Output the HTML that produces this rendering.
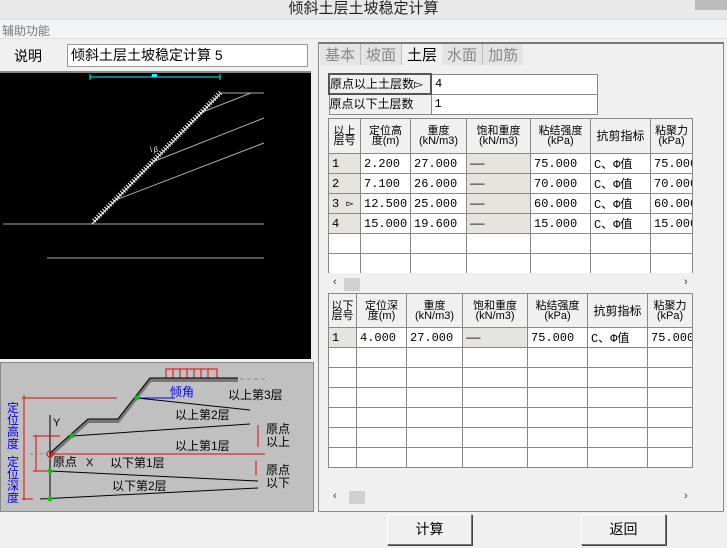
<!DOCTYPE html>
<html><head><meta charset="utf-8"><style>
*{margin:0;padding:0;box-sizing:border-box}
body{width:727px;height:548px;background:#f0f0f0;position:relative;overflow:hidden;font-family:"Liberation Sans","Noto Sans CJK SC",sans-serif;font-size:13px;color:#000}
.a{position:absolute}
table{border-collapse:collapse;table-layout:fixed;font-family:"Liberation Mono","Noto Sans CJK SC",monospace;font-size:12px}
td{border:1px solid #888;height:20px;padding:0 3px;white-space:nowrap;overflow:hidden}
th{border:1px solid #888;font-weight:normal;background:#f0f0f0;font-size:11px;line-height:10px;font-family:"Liberation Sans","Noto Sans CJK SC",sans-serif;overflow:hidden;white-space:nowrap}
td.g{background:#e6e4de}
td.h{background:#e6e4de}
.sb{position:absolute;height:13px;font-size:11px;color:#333}
.btn{position:absolute;border:1px solid #777;border-top-color:#fff;border-left-color:#fff;box-shadow:1px 1px 0 #444;background:#f0f0f0;text-align:center;line-height:29px;font-size:14px}
</style></head><body>
<div class="a" style="left:0;top:0;width:727px;height:19px;background:#e9e9e9"></div>
<div class="a" style="left:0;top:-3px;width:727px;text-align:center;font-size:15px;color:#222">倾斜土层土坡稳定计算</div>
<div class="a" style="left:695px;top:0;width:32px;height:10px;background:#bbb"></div>
<div class="a" style="left:0;top:19px;width:727px;height:20px;background:#f3f4f6;border-top:1px solid #ddd;border-bottom:1px solid #ddd"></div>
<div class="a" style="left:2px;top:22px;font-size:12px;color:#777">辅助功能</div>
<div class="a" style="left:14px;top:46px;font-size:14px">说明</div>
<div class="a" style="left:67px;top:44px;width:241px;height:23px;background:#fff;border:1px solid #999;font-size:14px;line-height:21px;padding-left:3px">倾斜土层土坡稳定计算 5</div>
<div class="a" style="left:0;top:71px;width:311px;height:2px;background:#888"></div>
<svg class="a" style="left:0;top:73px" width="311" height="286" viewBox="0 73 311 286">
<rect x="0" y="73" width="311" height="286" fill="#000"/>
<g stroke="#0ff" stroke-width="1"><line x1="90" y1="77" x2="220" y2="77"/><line x1="90" y1="74" x2="90" y2="80"/><line x1="220" y1="74" x2="220" y2="80"/></g>
<rect x="152" y="74" width="5" height="3" fill="#0ff"/>
<g stroke="#aaa" stroke-width="1"><line x1="220" y1="93" x2="264" y2="93"/><line x1="200" y1="113" x2="251" y2="93"/><line x1="155" y1="161" x2="264" y2="118"/><line x1="113" y1="201" x2="264" y2="143"/><line x1="3" y1="224" x2="264" y2="224"/><line x1="47" y1="258" x2="264" y2="258"/></g>
<line x1="92" y1="224" x2="220" y2="94" stroke="#fff" stroke-width="1"/>
<line x1="94" y1="221" x2="221" y2="92" stroke="#fff" stroke-width="5" stroke-dasharray="1 1.8"/>
<text x="150" y="152" fill="#fff" font-size="7">\ β</text>
</svg>
<div class="a" style="left:0;top:362px;width:314px;height:150px;background:#c0c0c0;border:1px solid #888"></div>
<svg class="a" style="left:0;top:355px" width="314" height="160" viewBox="0 355 314 160" font-family="Liberation Sans,Noto Sans CJK SC,sans-serif" font-size="12">
<g stroke="#e00" fill="none"><rect x="166" y="369" width="51" height="12"/><line x1="173" y1="369" x2="173" y2="381"/><line x1="180" y1="369" x2="180" y2="381"/><line x1="187" y1="369" x2="187" y2="381"/><line x1="194" y1="369" x2="194" y2="381"/><line x1="201" y1="369" x2="201" y2="381"/><line x1="208" y1="369" x2="208" y2="381"/></g>
<polyline points="50,455 88,421 118,421 150,380 238,380" fill="none" stroke="#777" stroke-width="4"/>
<polyline points="50,453 88,419 118,419 150,378 238,378" fill="none" stroke="#000" stroke-width="1"/>
<line x1="240" y1="379" x2="265" y2="379" stroke="#888" stroke-dasharray="4 3"/>
<g stroke="#000"><line x1="137" y1="398" x2="250" y2="410"/><line x1="72" y1="436" x2="250" y2="424"/><line x1="50" y1="471" x2="258" y2="481"/><line x1="40" y1="499" x2="258" y2="488"/><line x1="50" y1="415" x2="50" y2="500"/></g>
<line x1="137" y1="398" x2="175" y2="398" stroke="#00f"/>
<g stroke="#e00"><line x1="22" y1="398" x2="117" y2="398"/><line x1="22" y1="499" x2="33" y2="499"/><line x1="24" y1="395" x2="24" y2="500"/><line x1="36" y1="435" x2="36" y2="471"/><line x1="33" y1="436" x2="60" y2="436"/><line x1="33" y1="471" x2="50" y2="471"/><line x1="50" y1="454" x2="265" y2="454"/><line x1="258" y1="425" x2="258" y2="447"/><line x1="256" y1="461" x2="256" y2="475"/></g>
<circle cx="50" cy="454" r="3" fill="none" stroke="#e00"/>
<line x1="30" y1="454" x2="48" y2="454" stroke="#888" stroke-dasharray="3 2"/>
<g fill="#0c0"><circle cx="137" cy="398" r="2.5"/><circle cx="72" cy="436" r="2.5"/><circle cx="50" cy="471" r="2.5"/><circle cx="50" cy="499" r="2.5"/></g>
<text x="170" y="396" fill="#00f">倾角</text>
<g fill="#000"><text x="228" y="399">以上第3层</text><text x="175" y="419">以上第2层</text><text x="175" y="450">以上第1层</text><text x="110" y="467">以下第1层</text><text x="112" y="490">以下第2层</text><text x="53" y="466">原点</text><text x="86" y="466" font-size="11">X</text><text x="53" y="426" font-size="11">Y</text><text x="266" y="433">原点</text><text x="266" y="446">以上</text><text x="266" y="474">原点</text><text x="266" y="487">以下</text></g>
<g fill="#00f" font-size="12"><text x="7" y="412">定</text><text x="7" y="424">位</text><text x="7" y="436">高</text><text x="7" y="448">度</text><text x="7" y="466">定</text><text x="7" y="478">位</text><text x="7" y="490">深</text><text x="7" y="502">度</text></g>
</svg>
<div class="a" style="left:318px;top:42px;width:406px;height:470px;border:1px solid #888;border-top:2px solid #777"></div>
<div class="a" style="left:320px;top:44px;height:21px;font-size:15px;color:#888;display:flex">
<div style="padding:0 5px;border-right:1px solid #bbb;background:#e4e4e4">基本</div><div style="padding:0 5px;border-right:1px solid #bbb;background:#e4e4e4">坡面</div><div style="padding:0 5px;color:#000;background:#f0f0f0">土层</div><div style="padding:0 5px;border-right:1px solid #bbb;background:#e4e4e4">水面</div><div style="padding:0 5px;background:#e4e4e4">加筋</div></div>
<table class="a" style="left:328px;top:73px;width:270px">
<col style="width:102px"><col>
<tr><th style="height:20px;text-align:left;font-size:12px;border:2px solid #555">原点以上土层数▻</th><td style="background:#fff">4</td></tr>
<tr><th style="height:20px;text-align:left;font-size:12px">原点以下土层数</th><td style="background:#fff">1</td></tr></table>
<div class="a" style="left:328px;top:118px;width:365px;height:155px;overflow:hidden;background:#f0f0f0">
<table style="width:364px;background:#fff">
<col style="width:32px"><col style="width:50px"><col style="width:56px"><col style="width:64px"><col style="width:60px"><col style="width:60px"><col style="width:42px">
<tr><th style="height:35px">以上<br>层号</th><th>定位高<br>度(m)</th><th>重度<br>(kN/m3)</th><th>饱和重度<br>(kN/m3)</th><th>粘结强度<br>(kPa)</th><th style="font-size:12px">抗剪指标</th><th>粘聚力<br>(kPa)</th></tr>
<tr><td class="h">1</td><td>2.200</td><td>27.000</td><td class="g">——</td><td>75.000</td><td>C、Φ值</td><td>75.000</td></tr>
<tr><td class="h">2</td><td>7.100</td><td>26.000</td><td class="g">——</td><td>70.000</td><td>C、Φ值</td><td>70.000</td></tr>
<tr><td class="h">3 ▻</td><td>12.500</td><td>25.000</td><td class="g">——</td><td>60.000</td><td>C、Φ值</td><td>60.000</td></tr>
<tr><td class="h">4</td><td>15.000</td><td>19.600</td><td class="g">——</td><td>15.000</td><td>C、Φ值</td><td>15.000</td></tr>
<tr><td></td><td></td><td></td><td></td><td></td><td></td><td></td></tr>
<tr><td></td><td></td><td></td><td></td><td></td><td></td><td></td></tr>
</table></div>
<div class="sb" style="left:344px;top:278px;width:16px;background:#d0d0d0"></div>
<div class="sb" style="left:333px;top:276px">‹</div><div class="sb" style="left:684px;top:276px">›</div>
<div class="a" style="left:328px;top:293px;width:365px;height:195px;overflow:hidden;background:#f0f0f0">
<table style="width:364px;background:#fff">
<col style="width:28px"><col style="width:50px"><col style="width:56px"><col style="width:65px"><col style="width:60px"><col style="width:60px"><col style="width:45px">
<tr><th style="height:34px">以下<br>层号</th><th>定位深<br>度(m)</th><th>重度<br>(kN/m3)</th><th>饱和重度<br>(kN/m3)</th><th>粘结强度<br>(kPa)</th><th style="font-size:12px">抗剪指标</th><th>粘聚力<br>(kPa)</th></tr>
<tr><td class="h">1</td><td>4.000</td><td>27.000</td><td class="g">——</td><td>75.000</td><td>C、Φ值</td><td>75.000</td></tr>
<tr><td></td><td></td><td></td><td></td><td></td><td></td><td></td></tr>
<tr><td></td><td></td><td></td><td></td><td></td><td></td><td></td></tr>
<tr><td></td><td></td><td></td><td></td><td></td><td></td><td></td></tr>
<tr><td></td><td></td><td></td><td></td><td></td><td></td><td></td></tr>
<tr><td></td><td></td><td></td><td></td><td></td><td></td><td></td></tr>
<tr><td></td><td></td><td></td><td></td><td></td><td></td><td></td></tr>
</table></div>
<div class="sb" style="left:349px;top:491px;width:16px;background:#d0d0d0"></div>
<div class="sb" style="left:333px;top:490px">‹</div><div class="sb" style="left:684px;top:490px">›</div>
<div class="btn" style="left:387px;top:514px;width:85px;height:31px">计算</div>
<div class="btn" style="left:581px;top:514px;width:85px;height:31px">返回</div>
</body></html>
